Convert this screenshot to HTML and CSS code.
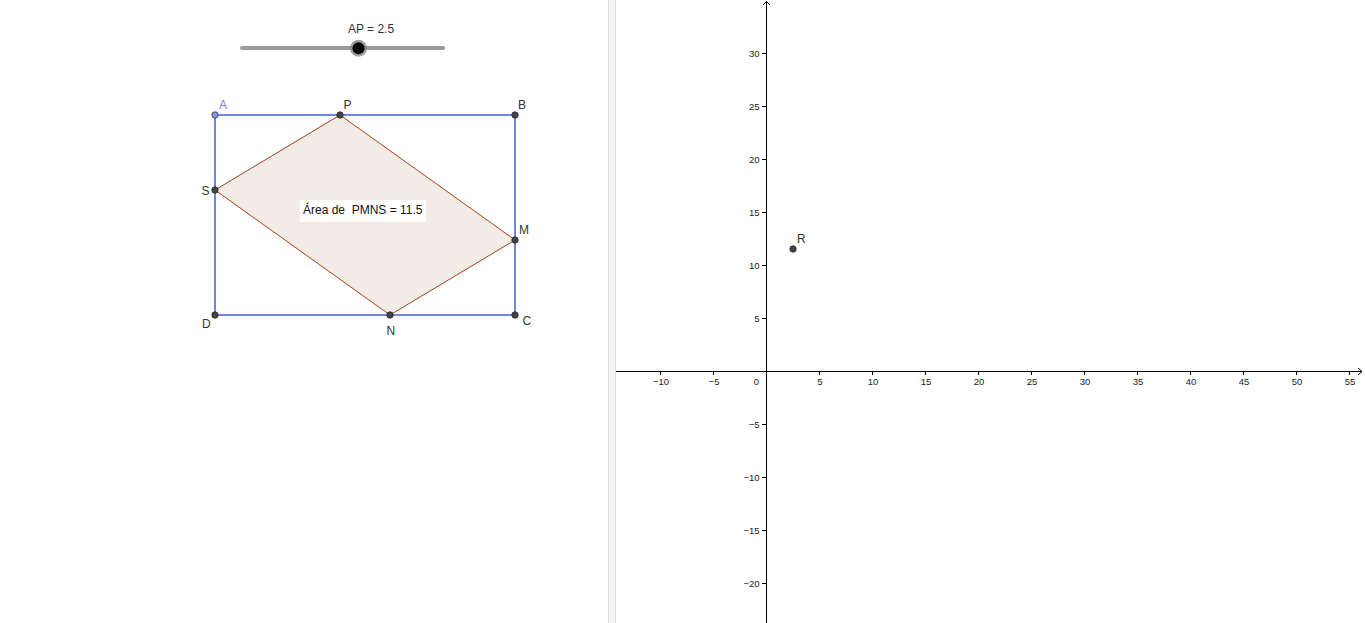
FILE: index.html
```html
<!DOCTYPE html>
<html>
<head>
<meta charset="utf-8">
<link rel="stylesheet" href="styles.css">
</head>
<body>
<div class="app">
  <div class="panel left">
    <svg class="canvas" width="608" height="623" viewBox="0 0 608 623">
      <text class="lbl" x="371" y="33" text-anchor="middle">AP = 2.5</text>
      <line class="track" x1="242" y1="48" x2="443" y2="48"/>
      <circle class="knob-halo" cx="358.5" cy="48.3" r="8.5"/>
      <circle class="knob" cx="358.5" cy="48.3" r="6"/>

      <polygon class="poly" points="340,115 515,240 390,315 215,190"/>
      <polygon class="rect" points="215,115 515,115 515,315 215,315"/>

      <rect class="box" x="300" y="200" width="126" height="22"/>
      <text class="lbl pre" x="303" y="213.5">Área de  PMNS = 11.5</text>

      <circle class="pt free" cx="215" cy="115" r="3.2"/>
      <circle class="pt" cx="515" cy="115" r="3.2"/>
      <circle class="pt" cx="515" cy="315" r="3.2"/>
      <circle class="pt" cx="215" cy="315" r="3.2"/>
      <circle class="pt" cx="340" cy="115" r="3.2"/>
      <circle class="pt" cx="515" cy="240" r="3.2"/>
      <circle class="pt" cx="390" cy="315" r="3.2"/>
      <circle class="pt" cx="215" cy="190" r="3.2"/>

      <text class="lbl blue" x="219" y="108.5">A</text>
      <text class="lbl" x="343.5" y="108.5">P</text>
      <text class="lbl" x="518" y="108.5">B</text>
      <text class="lbl" x="201.5" y="195">S</text>
      <text class="lbl" x="519" y="234">M</text>
      <text class="lbl" x="202" y="328">D</text>
      <text class="lbl" x="386.5" y="335">N</text>
      <text class="lbl" x="522.5" y="325">C</text>
    </svg>
  </div>
  <div class="divider"></div>
  <div class="panel right">
    <svg class="canvas" width="750" height="623" viewBox="0 0 750 623">
      <line class="axis" x1="0" y1="371.5" x2="746" y2="371.5"/>
      <polyline class="arrow" points="742,368 746,371.5 742,375"/>
      <line class="axis" x1="150.5" y1="1" x2="150.5" y2="623"/>
      <polyline class="arrow" points="147,5 150.5,1.5 154,5"/>

      <g class="ticks">
        <line x1="44.5" y1="371" x2="44.5" y2="375"/>
        <line x1="97.5" y1="371" x2="97.5" y2="375"/>
        <line x1="203.5" y1="371" x2="203.5" y2="375"/>
        <line x1="256.5" y1="371" x2="256.5" y2="375"/>
        <line x1="309.5" y1="371" x2="309.5" y2="375"/>
        <line x1="362.5" y1="371" x2="362.5" y2="375"/>
        <line x1="415.5" y1="371" x2="415.5" y2="375"/>
        <line x1="468.5" y1="371" x2="468.5" y2="375"/>
        <line x1="521.5" y1="371" x2="521.5" y2="375"/>
        <line x1="574.5" y1="371" x2="574.5" y2="375"/>
        <line x1="627.5" y1="371" x2="627.5" y2="375"/>
        <line x1="680.5" y1="371" x2="680.5" y2="375"/>
        <line x1="733.5" y1="371" x2="733.5" y2="375"/>

        <line x1="146" y1="53.5" x2="150" y2="53.5"/>
        <line x1="146" y1="106.5" x2="150" y2="106.5"/>
        <line x1="146" y1="159.5" x2="150" y2="159.5"/>
        <line x1="146" y1="212.5" x2="150" y2="212.5"/>
        <line x1="146" y1="265.5" x2="150" y2="265.5"/>
        <line x1="146" y1="318.5" x2="150" y2="318.5"/>
        <line x1="146" y1="424.5" x2="150" y2="424.5"/>
        <line x1="146" y1="477.5" x2="150" y2="477.5"/>
        <line x1="146" y1="530.5" x2="150" y2="530.5"/>
        <line x1="146" y1="583.5" x2="150" y2="583.5"/>
      </g>

      <g class="num" text-anchor="middle">
        <text x="45" y="385">−10</text>
        <text x="98" y="385">−5</text>
        <text x="204" y="385">5</text>
        <text x="257" y="385">10</text>
        <text x="310" y="385">15</text>
        <text x="363" y="385">20</text>
        <text x="416" y="385">25</text>
        <text x="469" y="385">30</text>
        <text x="522" y="385">35</text>
        <text x="575" y="385">40</text>
        <text x="628" y="385">45</text>
        <text x="681" y="385">50</text>
        <text x="734" y="385">55</text>
      </g>
      <g class="num" text-anchor="end">
        <text x="143" y="385">0</text>
        <text x="143.5" y="57">30</text>
        <text x="143.5" y="110">25</text>
        <text x="143.5" y="163">20</text>
        <text x="143.5" y="216">15</text>
        <text x="143.5" y="269">10</text>
        <text x="143.5" y="322">5</text>
        <text x="143.5" y="428">−5</text>
        <text x="143.5" y="481">−10</text>
        <text x="143.5" y="534">−15</text>
        <text x="143.5" y="587">−20</text>
      </g>

      <circle class="pt" cx="177" cy="249" r="3.2"/>
      <text class="lbl" x="181" y="243">R</text>
    </svg>
  </div>
</div>
</body>
</html>
```

FILE: styles.css
```css
html, body {
  margin: 0;
  padding: 0;
  background: #ffffff;
  overflow: hidden;
}

.app {
  display: flex;
  width: 1366px;
  height: 623px;
  font-family: "Liberation Sans", Arial, sans-serif;
}

.panel {
  height: 623px;
  background: #ffffff;
  overflow: hidden;
}

.left {
  width: 608px;
  flex: none;
}

.right {
  flex: 1;
}

.divider {
  width: 6px;
  flex: none;
  background: #f5f5f5;
  border-left: 1px solid #dcdcdc;
  border-right: 1px solid #dcdcdc;
}

.canvas {
  display: block;
}

.lbl {
  font-family: "Liberation Sans", Arial, sans-serif;
  font-size: 12px;
  fill: #333333;
}

.pre {
  white-space: pre;
  fill: #111111;
}

.blue {
  fill: #6b80e3;
}

.track {
  stroke: #9a9a9a;
  stroke-width: 4;
  stroke-linecap: round;
}

.knob-halo {
  fill: #8a8a8a;
  opacity: 0.8;
}

.knob {
  fill: #000000;
}

.poly {
  fill: #f3ebe6;
  stroke: #a0401a;
  stroke-width: 1;
}

.rect {
  fill: none;
  stroke: #6f86e6;
  stroke-width: 2;
}

.box {
  fill: #ffffff;
}

.pt {
  fill: #444444;
  stroke: #222222;
  stroke-width: 0.8;
}

.pt.free {
  fill: #7f9ae0;
  stroke: #333333;
}

.axis {
  stroke: #000000;
  stroke-width: 1;
}

.arrow {
  fill: none;
  stroke: #000000;
  stroke-width: 1;
}

.ticks line {
  stroke: #000000;
  stroke-width: 1;
}

.num {
  font-family: "Liberation Sans", Arial, sans-serif;
  font-size: 9.5px;
  fill: #222222;
}
```
